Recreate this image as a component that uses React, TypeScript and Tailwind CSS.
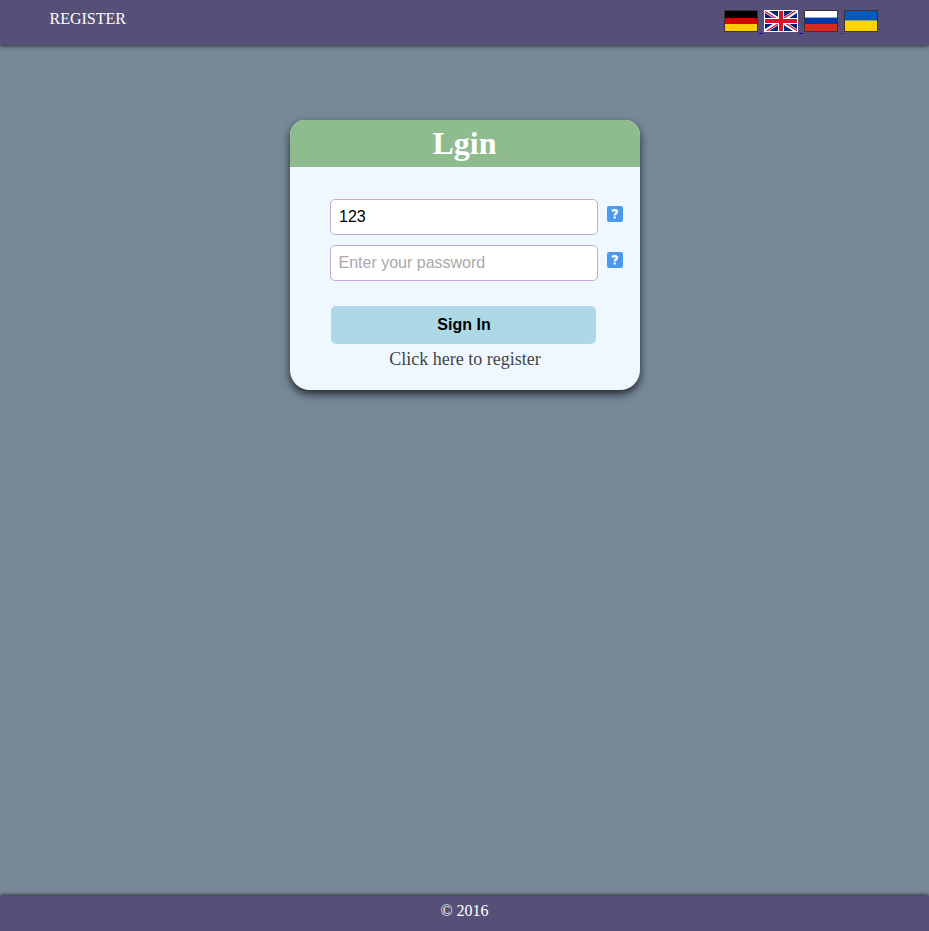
import React from "react";

function Help() {
  return (
    <svg className="ml-[9px] mt-[7px] h-4 w-4 shrink-0" viewBox="0 0 16 16">
      <rect width="16" height="16" rx="2" fill="#4c9aef" />
      <path d="M5.1 5C6.8 3.6 10 4 9.9 6C9.8 7.5 7.9 7.5 7.7 9.3M7.7 10.5V12.6" fill="none" stroke="white" strokeWidth="2.3" />
    </svg>
  );
}

function Flag({ code }: { code: string }) {
  return (
    <svg className="h-[22px] w-[34px]" viewBox="0 0 34 22">
      {code === "de" && <><path fill="#000" d="M0 0h34v8H0z" /><path fill="#d00" d="M0 8h34v6H0z" /><path fill="#ffce00" d="M0 14h34v8H0z" /></>}
      {code === "gb" && (
        <>
          <path fill="#00247d" d="M0 0h34v22H0z" />
          <path stroke="#fff" strokeWidth="3.8" d="M0 0L34 22M34 0L0 22" />
          <path stroke="#cf142b" strokeWidth="1.3" d="M0 .8L17 11.8M34 21.2L17 10.2M34 -.8L17 10.2M0 22.8L17 11.8" />
          <path stroke="#fff" strokeWidth="6" d="M17 0V22M0 11H34" />
          <path stroke="#cf142b" strokeWidth="4" d="M17 0V22M0 11H34" />
        </>
      )}
      {code === "ru" && <><path fill="#fff" d="M0 0h34v7H0z" /><path fill="#8fa9d4" d="M0 7h34v1H0z" /><path fill="#0039a6" d="M0 8h34v6H0z" /><path fill="#d52b1e" d="M0 14h34v8H0z" /></>}
      {code === "ua" && <><path fill="#005bbb" d="M0 0h34v10.5H0z" /><path fill="#ffd500" d="M0 11h34v11H0z" /><path fill="#88a36b" d="M0 10h34v1H0z" /></>}
      <rect x=".5" y=".5" width="33" height="21" fill="none" stroke={code === "gb" ? "#fff" : "#402e36"} />
    </svg>
  );
}

export default function App() {
  return (
    <div className="flex h-screen flex-col bg-[#778899] font-['Liberation_Serif',serif] text-base">
      <header className="flex h-[45px] shrink-0 justify-between bg-[#565078] pl-[49.5px] pr-[51px] text-white shadow-[0_1px_4px_rgba(0,0,0,.7)]">
        <a className="mt-[10px] leading-[18px]">REGISTER</a>
        <nav className="mt-[10px] flex">
          <Flag code="de" />
          <span className="mx-px mt-[23px] h-px w-1 bg-[#0000cc]" />
          <Flag code="gb" />
          <span className="mx-px mt-[23px] h-px w-1 bg-[#0000cc]" />
          <Flag code="ru" />
          <span className="mx-px mt-[23px] h-px w-1 bg-[#551a8b]" />
          <Flag code="ua" />
        </nav>
      </header>
      <main className="flex-1 pt-[75px]">
        <form className="ml-[290px] h-[270px] w-[350px] overflow-hidden rounded-b-[20px] rounded-t-[15px] bg-[#f0f8ff] shadow-[0_4px_8px_rgba(0,0,0,.7)]">
          <h1 className="h-[47px] bg-[#8fbc8f] pr-px text-center text-[32px] font-bold leading-[47px] text-white">Lgin</h1>
          <div className="ml-10 mt-8 flex"><input className="h-9 w-[268px] rounded-[5px] border border-[#c1a9d8] bg-white px-2 font-['Liberation_Sans',sans-serif]" defaultValue="123" /><Help /></div>
          <div className="ml-10 mt-2.5 flex"><input className="h-9 w-[268px] rounded-[5px] border border-[#c1a9d8] bg-white px-[7.5px] font-['Liberation_Sans',sans-serif] placeholder:text-[#a9a9a9]" placeholder="Enter your password" /><Help /></div>
          <button className="ml-[41px] mt-[25px] block h-[38px] w-[265px] rounded-[5px] bg-[#add8e6] pl-px font-['Liberation_Sans',sans-serif] font-bold text-black">Sign In</button>
          <a className="mt-[5px] block text-center text-lg leading-5 text-[#444]">Click here to register</a>
        </form>
      </main>
      <footer className="h-[35px] shrink-0 bg-[#565078] text-center leading-[30px] text-white shadow-[0_-1px_4px_rgba(0,0,0,.7)]">© 2016</footer>
    </div>
  );
}
